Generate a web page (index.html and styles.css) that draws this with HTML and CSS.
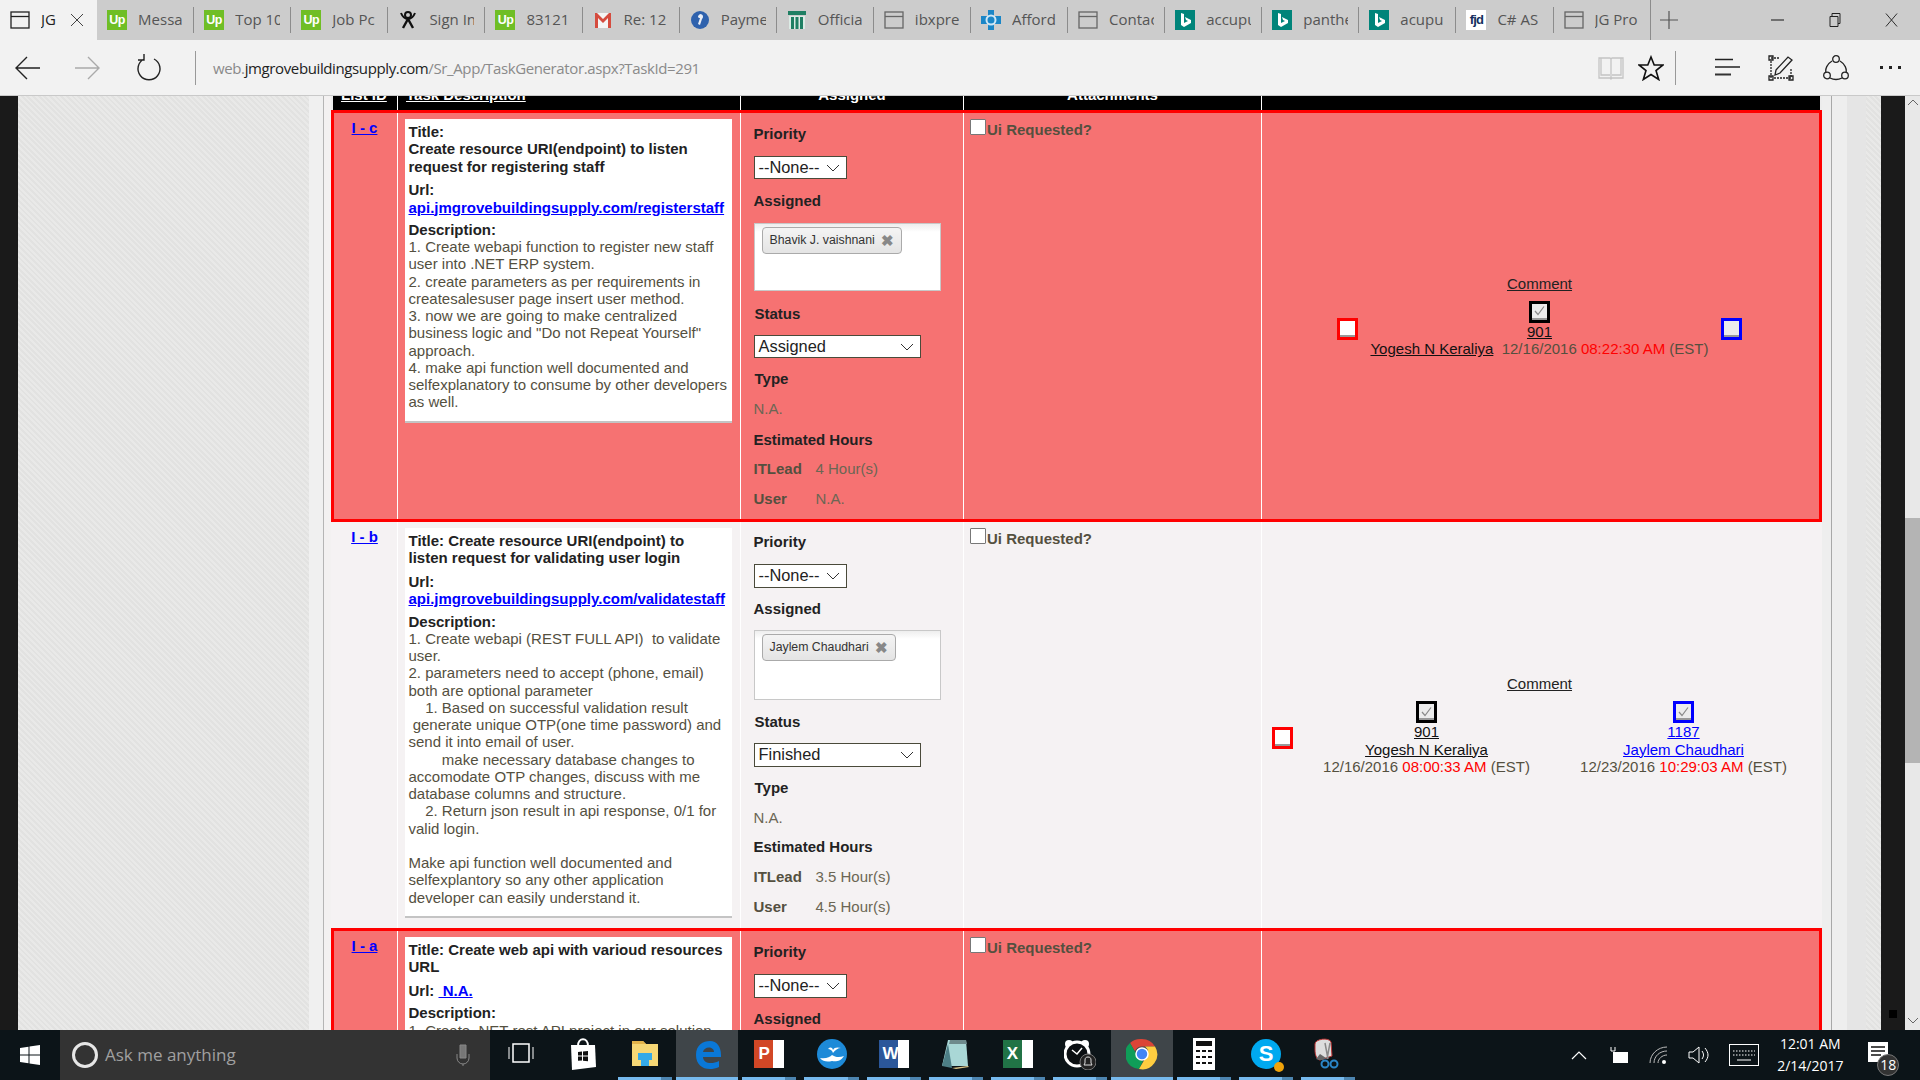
FILE: index.html
```html
<!DOCTYPE html>
<html lang="en">
<head>
<meta charset="utf-8">
<title>JG</title>
<link rel="stylesheet" href="styles.css">
</head>
<body>
<svg class="defs" width="0" height="0" aria-hidden="true">
  <symbol id="i-window" viewBox="0 0 20 20"><rect x="1" y="2" width="18" height="16" fill="none" stroke="currentColor" stroke-width="1.3"/><path d="M1 6.5h18" stroke="currentColor" stroke-width="1.3"/></symbol>
  <symbol id="i-bing" viewBox="0 0 20 20"><rect width="20" height="20" fill="#00847a"/><path d="M6 3l3 1v9l4-2-2-1-1-3 6 3v3l-7 4-3-2z" fill="#fff"/></symbol>
  <symbol id="i-check" viewBox="0 0 13 13"><path d="M2 7l3 3.5L11 2.5" fill="none" stroke="#8a8a8a" stroke-width="1.2"/></symbol>
  <symbol id="i-caret" viewBox="0 0 14 8"><path d="M1 1l6 6 6-6" fill="none" stroke="#333" stroke-width="1"/></symbol>
</svg>

<header class="tabs">
  <div class="tab tab-active">
    <svg class="tab-icon"><use href="#i-window"/></svg><span class="tab-title tab-title-active">JG</span>
    <svg class="tab-close" viewBox="0 0 14 14"><path d="M1 1l12 12M13 1L1 13" stroke="#444" stroke-width="1"/></svg>
  </div>
  <div class="tab"><span class="tab-icon up">Up</span><span class="tab-title">Messa</span></div>
  <div class="tab"><span class="tab-icon up">Up</span><span class="tab-title">Top 10</span></div>
  <div class="tab"><span class="tab-icon up">Up</span><span class="tab-title">Job Pc</span></div>
  <div class="tab">
    <svg class="tab-icon" viewBox="0 0 20 20"><path d="M3 3c2 5 5 6 7 6s5-1 7-6" fill="none" stroke="#111" stroke-width="2"/><circle cx="10" cy="5" r="3" fill="none" stroke="#111" stroke-width="2"/><path d="M5 18l5-9 5 9" fill="none" stroke="#111" stroke-width="2.4"/></svg><span class="tab-title">Sign In</span>
  </div>
  <div class="tab"><span class="tab-icon up">Up</span><span class="tab-title">83121</span></div>
  <div class="tab">
    <svg class="tab-icon" viewBox="0 0 20 20"><path d="M2 3h16v15H2z" fill="#f4f4f4"/><path d="M2 3v15h3V8l5 5 5-5v10h3V3h-2l-6 6-6-6z" fill="#d54c3f"/></svg><span class="tab-title">Re: 12</span>
  </div>
  <div class="tab">
    <svg class="tab-icon" viewBox="0 0 20 20"><circle cx="10" cy="10" r="9" fill="#2f62ad"/><path d="M10 4c3 0 4 3 2 5l-2 6-2-1 2-6c-1 0-2 0-2-2z" fill="#e9eef6"/></svg><span class="tab-title">Payme</span>
  </div>
  <div class="tab">
    <svg class="tab-icon" viewBox="0 0 20 20"><path d="M1 1h18v4H1z" fill="#1f7f63"/><path d="M2 6h16v13H2z" fill="#dcebe5"/><path d="M4 7h3v12H4zM8.500 7h3v12h-3zM13 7h3v12h-3z" fill="#1f7f63"/></svg><span class="tab-title">Officia</span>
  </div>
  <div class="tab"><svg class="tab-icon gray"><use href="#i-window"/></svg><span class="tab-title">ibxpre</span></div>
  <div class="tab">
    <svg class="tab-icon" viewBox="0 0 20 20"><path d="M7 0h6v6h7v8h-7v6H7v-6H0V6h7z" fill="#1a86c7"/><circle cx="10" cy="10" r="4.500" fill="none" stroke="#cfe8f7" stroke-width="2"/></svg><span class="tab-title">Afford</span>
  </div>
  <div class="tab"><svg class="tab-icon gray"><use href="#i-window"/></svg><span class="tab-title">Contac</span></div>
  <div class="tab"><svg class="tab-icon"><use href="#i-bing"/></svg><span class="tab-title">accupu</span></div>
  <div class="tab"><svg class="tab-icon"><use href="#i-bing"/></svg><span class="tab-title">panthe</span></div>
  <div class="tab"><svg class="tab-icon"><use href="#i-bing"/></svg><span class="tab-title">acupu</span></div>
  <div class="tab"><span class="tab-icon fjd">fjd</span><span class="tab-title">C# AS</span></div>
  <div class="tab tab-last"><svg class="tab-icon gray"><use href="#i-window"/></svg><span class="tab-title">JG Pro</span></div>
  <svg class="tab-plus" viewBox="0 0 18 18"><path d="M9 0v18M0 9h18" stroke="#555" stroke-width="1.2"/></svg>
  <div class="win-controls">
    <svg class="win-btn" viewBox="0 0 12 12"><path d="M0 6h12" stroke="#222"/></svg>
    <svg class="win-btn" viewBox="0 0 12 14"><path d="M1.500 3.500h8v10h-8zM3.500 3.500v-3h8v10h-2" fill="none" stroke="#222"/></svg>
    <svg class="win-btn" viewBox="0 0 14 14"><path d="M1 0l12 14M13 0L1 14" stroke="#222"/></svg>
  </div>
</header>

<nav class="toolbar">
  <svg class="tool tool-back" viewBox="0 0 26 24"><path d="M25 12H2M12 1L1 12l11 11" fill="none" stroke="#222" stroke-width="1.400"/></svg>
  <svg class="tool tool-fwd" viewBox="0 0 26 24"><path d="M1 12h23M14 1l11 11-11 11" fill="none" stroke="#aaa" stroke-width="1.400"/></svg>
  <svg class="tool tool-reload" viewBox="0 0 26 28"><path d="M8 5a11 11 0 1 0 10 0M8 0v6H2" fill="none" stroke="#222" stroke-width="1.400"/></svg>
  <span class="tool-divider"></span>
  <div class="url"><span class="url-dim">web.</span><span class="url-host">jmgrovebuildingsupply.com</span><span class="url-dim">/Sr_App/TaskGenerator.aspx?TaskId=291</span></div>
  <svg class="tool tool-book" viewBox="0 0 26 26"><path d="M1 3h11l1 1 1-1h11v20H14l-1 1-1-1H1zM13 4v20M3 3v17h9M23 3v17h-9" fill="none" stroke="#c4c4c4" stroke-width="1.300"/></svg>
  <svg class="tool tool-star" viewBox="0 0 26 26"><path d="M13 2l3.200 8H25l-7 5.500 2.700 9L13 19.500 5.300 24.500l2.700-9L1 10h8.800z" fill="none" stroke="#111" stroke-width="1.600"/></svg>
  <span class="tool-divider tool-divider-right"></span>
  <svg class="tool tool-hub" viewBox="0 0 26 20"><path d="M1 1.500h18M1 9h25" stroke="#222" stroke-width="1.300"/><path d="M1 16.500h16" stroke="#333" stroke-width="2"/></svg>
  <svg class="tool tool-note" viewBox="0 0 26 26"><path d="M3 3h9M3 6v17M23 14v9M6 23h17" fill="none" stroke="#222" stroke-width="1.300" stroke-dasharray="2 1"/><path d="M1 1h4v4H1zM1 21h4v4H1zM21 21h4v4h-4z" fill="none" stroke="#222" stroke-width="1.300"/><path d="M8 15L20 2l4 3-12 13-5 2z" fill="none" stroke="#222" stroke-width="1.300"/></svg>
  <svg class="tool tool-share" viewBox="0 0 26 26"><path d="M9 6C4 9 2 14 3 18M17 6c5 3 7 8 6 12M7 23c4 2 8 2 12 0" fill="none" stroke="#222" stroke-width="1.300"/><circle cx="13" cy="4" r="3.300" fill="none" stroke="#222" stroke-width="1.300"/><circle cx="4" cy="20.500" r="3.300" fill="none" stroke="#222" stroke-width="1.300"/><circle cx="22" cy="20.500" r="3.300" fill="none" stroke="#222" stroke-width="1.300"/></svg>
  <div class="tool-more"><i></i><i></i><i></i></div>
</nav>

<main class="viewport">
  <div class="gutter-black"></div>
  <div class="texture texture-left"></div>
  <div class="gutter-left"></div>

  <section class="sheet">
    <div class="head">
      <div class="head-cell"><a class="head-link head-id">List ID</a></div>
      <div class="head-cell"><a class="head-link head-desc">Task Description</a></div>
      <div class="head-cell head-center"><span class="head-link head-plain">Assigned</span></div>
      <div class="head-cell head-center"><span class="head-link head-plain">Attachments</span></div>
      <div class="head-cell head-last"></div>
    </div>

    <article class="row row-alert">
      <div class="cell cell-id"><a class="task-id" href="#">I - c</a></div>
      <div class="cell">
        <div class="box">
          <div class="strong title">Title:<br>Create resource URI(endpoint) to listen request for registering staff</div>
          <div class="strong gap">Url:<br><a class="box-link" href="#">api.jmgrovebuildingsupply.com/registerstaff</a></div>
          <div class="strong gap-sm">Description:</div>
          <div class="body">1. Create webapi function to register new staff user into .NET ERP system.<br>2. create parameters as per requirements in createsalesuser page insert user method.<br>3. now we are going to make centralized business logic and "Do not Repeat Yourself" approach.<br>4. make api function well documented and selfexplanatory to consume by other developers as well.</div>
        </div>
      </div>
      <div class="cell cell-meta tight">
        <div class="lbl first">Priority</div>
        <div class="select select-sm"><span>--None--</span><svg class="caret"><use href="#i-caret"/></svg></div>
        <div class="lbl">Assigned</div>
        <div class="chosen"><span class="tag">Bhavik J. vaishnani<b class="tag-x">✖</b></span></div>
        <div class="lbl lbl-status">Status</div>
        <div class="select select-lg"><span>Assigned</span><svg class="caret"><use href="#i-caret"/></svg></div>
        <div class="lbl lbl-type">Type</div>
        <div class="val">N.A.</div>
        <div class="lbl lbl-est">Estimated Hours</div>
        <div class="hours hours-lead"><b>ITLead</b><span>4 Hour(s)</span></div>
        <div class="hours"><b>User</b><span>N.A.</span></div>
      </div>
      <div class="cell cell-ui"><span class="ui-check"></span><b class="ui-label">Ui Requested?</b></div>
      <div class="cell cell-comments">
        <a class="comment" href="#">Comment</a>
        <div class="approvals approvals-narrow">
          <span class="flag flag-red"><span class="flag-in flag-white"></span></span>
          <div class="who">
            <span class="flag flag-black"><span class="flag-in"><svg class="tick"><use href="#i-check"/></svg></span></span>
            <a class="code" href="#">901</a>
            <div><a class="code" href="#">Yogesh N Keraliya</a> <span class="stamp">&nbsp;12/16/2016 <em>08:22:30 AM</em> (EST)</span></div>
          </div>
          <span class="flag flag-blue"><span class="flag-in"></span></span>
        </div>
      </div>
    </article>

    <article class="row row-plain">
      <div class="cell cell-id"><a class="task-id" href="#">I - b</a></div>
      <div class="cell">
        <div class="box">
          <div class="strong title">Title: Create resource URI(endpoint) to listen request for validating user login</div>
          <div class="strong gap">Url:<br><a class="box-link" href="#">api.jmgrovebuildingsupply.com/validatestaff</a></div>
          <div class="strong gap-sm">Description:</div>
          <div class="body">1. Create webapi (REST FULL API) &nbsp;to validate user.<br>2. parameters need to accept (phone, email) both are optional parameter<br>&nbsp;&nbsp;&nbsp;&nbsp;1. Based on successful validation result<br>&nbsp;generate unique OTP(one time password) and send it into email of user.<br>&nbsp;&nbsp;&nbsp;&nbsp;&nbsp;&nbsp;&nbsp;&nbsp;make necessary database changes to accomodate OTP changes, discuss with me database columns and structure.<br>&nbsp;&nbsp;&nbsp;&nbsp;2. Return json result in api response, 0/1 for valid login.<br><br>Make api function well documented and selfexplantory so any other application developer can easily understand it.</div>
        </div>
      </div>
      <div class="cell cell-meta">
        <div class="lbl first">Priority</div>
        <div class="select select-sm"><span>--None--</span><svg class="caret"><use href="#i-caret"/></svg></div>
        <div class="lbl">Assigned</div>
        <div class="chosen"><span class="tag">Jaylem Chaudhari<b class="tag-x">✖</b></span></div>
        <div class="lbl lbl-status">Status</div>
        <div class="select select-lg"><span>Finished</span><svg class="caret"><use href="#i-caret"/></svg></div>
        <div class="lbl lbl-type">Type</div>
        <div class="val">N.A.</div>
        <div class="lbl lbl-est">Estimated Hours</div>
        <div class="hours hours-lead"><b>ITLead</b><span>3.5 Hour(s)</span></div>
        <div class="hours"><b>User</b><span>4.5 Hour(s)</span></div>
      </div>
      <div class="cell cell-ui"><span class="ui-check"></span><b class="ui-label">Ui Requested?</b></div>
      <div class="cell cell-comments">
        <a class="comment" href="#">Comment</a>
        <div class="approvals approvals-wide">
          <span class="flag flag-red"><span class="flag-in flag-white"></span></span>
          <div class="who who-col">
            <span class="flag flag-black"><span class="flag-in"><svg class="tick"><use href="#i-check"/></svg></span></span>
            <a class="code" href="#">901</a>
            <a class="code name" href="#">Yogesh N Keraliya</a>
            <div class="stamp">12/16/2016 <em>08:00:33 AM</em> (EST)</div>
          </div>
          <div class="who who-col">
            <span class="flag flag-blue"><span class="flag-in"><svg class="tick"><use href="#i-check"/></svg></span></span>
            <a class="code code-blue" href="#">1187</a>
            <a class="code code-blue name" href="#">Jaylem Chaudhari</a>
            <div class="stamp">12/23/2016 <em>10:29:03 AM</em> (EST)</div>
          </div>
        </div>
      </div>
    </article>

    <article class="row row-alert">
      <div class="cell cell-id"><a class="task-id" href="#">I - a</a></div>
      <div class="cell">
        <div class="box">
          <div class="strong title">Title: Create web api with varioud resources URL</div>
          <div class="strong gap">Url: <a class="box-link" href="#">&nbsp;N.A.</a></div>
          <div class="strong gap-sm">Description:</div>
          <div class="body">1. Create .NET rest API project in our solution.</div>
        </div>
      </div>
      <div class="cell cell-meta meta-low">
        <div class="lbl first">Priority</div>
        <div class="select select-sm"><span>--None--</span><svg class="caret"><use href="#i-caret"/></svg></div>
        <div class="lbl">Assigned</div>
      </div>
      <div class="cell cell-ui"><span class="ui-check"></span><b class="ui-label">Ui Requested?</b></div>
      <div class="cell cell-comments"></div>
    </article>
  </section>

  <div class="gutter-a"></div>
  <div class="gutter-b"></div>
  <div class="gutter-c"></div>
  <div class="texture texture-right"></div>
  <div class="gutter-dark"><span class="mini-square"></span></div>
  <div class="scrollbar">
    <svg class="scroll-arrow" viewBox="0 0 12 7"><path d="M1 6l5-5 5 5" fill="none" stroke="#666"/></svg>
    <div class="scroll-thumb"></div>
    <svg class="scroll-arrow scroll-arrow-end" viewBox="0 0 12 7"><path d="M1 1l5 5 5-5" fill="none" stroke="#666"/></svg>
  </div>
</main>

<footer class="taskbar">
  <div class="start"><svg width="20" height="20" viewBox="0 0 20 20"><path d="M0 3l8.500-1.200V9.500H0zM9.500 1.600L20 0v9.500H9.500zM0 10.500h8.500v7.700L0 17zM9.500 10.500H20V20L9.500 18.400z" fill="#fff"/></svg></div>
  <div class="search">
    <span class="cortana"></span>
    <span class="search-text">Ask me anything</span>
    <svg class="mic" viewBox="0 0 14 22"><path d="M4 1h6v13H4z" fill="#777" stroke="#888"/><path d="M1 10v4a6 6 0 0 0 12 0v-4M7 20v2" fill="none" stroke="#888"/></svg>
  </div>
  <div class="tb-item"><svg class="tb-icon" viewBox="0 0 32 32"><rect x="8" y="6" width="16" height="18" fill="none" stroke="#fff" stroke-width="1.500"/><path d="M4 9v12M28 9v12" stroke="#fff"/></svg></div>
  <div class="tb-item"><svg class="tb-icon" viewBox="0 0 32 32"><path d="M11 8c0-9 10-9 10 0" fill="none" stroke="#fff" stroke-width="2"/><path d="M4 7l24 0 1 22-24 3z" fill="#fff"/><path d="M11 14l4-.5v4h-4zM16 13.400l5-.5v4.600h-5zM11 18.500h4v4l-4 .3zM16 18.500h5v4.800l-5-.5z" fill="#111"/></svg></div>
  <div class="tb-item tb-run"><svg class="tb-icon" viewBox="0 0 32 32"><path d="M3 3h11l3 3h12v22H3z" fill="#f6d775"/><path d="M3 3h11l3 3H3z" fill="#e3b34a"/><path d="M9 15h14v7h-3v6h-8v-6H9z" fill="#34a9e8"/></svg></div>
  <div class="tb-item tb-run tb-active"><svg class="tb-icon" viewBox="0 0 32 32"><path d="M5 17C5 7 12 3 19 3c7 0 11 6 11 14v2H12c0 6 8 8 16 4v6c-11 5-23 1-23-12zm7-3h11c0-6-10-6-11 0z" fill="#0a78d7"/></svg></div>
  <div class="tb-item tb-run"><span class="tb-doc tb-ppt">P</span></div>
  <div class="tb-item tb-run"><svg class="tb-icon" viewBox="0 0 32 32"><circle cx="16" cy="16" r="15" fill="#1d8ad8"/><path d="M4 20c6 1 10-1 12-3 3 2 7 3 12 1-3 5-8 6-12 5-4 1-9 1-12-3zM12 11c2-2 4-2 5 1 1-3 5-3 8-2-3 0-6 2-8 5-1-3-3-4-5-4z" fill="#fff"/></svg></div>
  <div class="tb-item tb-run"><span class="tb-doc tb-word">W</span></div>
  <div class="tb-item tb-run"><svg class="tb-icon" viewBox="0 0 32 32"><path d="M8 2h18l2 26H2z" fill="#a9d7d6"/><path d="M10 2h16l1 4H9z" fill="#6e8a8c"/><path d="M2 28L8 6l4 24z" fill="#4d7f86"/><path d="M12 30l16-2 1 1-13 2z" fill="#dcc689"/></svg></div>
  <div class="tb-item tb-run"><span class="tb-doc tb-excel">X</span></div>
  <div class="tb-item tb-run"><svg class="tb-icon" viewBox="0 0 32 32"><circle cx="5" cy="6" r="4" fill="#fff"/><circle cx="21" cy="6" r="4" fill="#fff"/><circle cx="13" cy="16" r="12" fill="#0b0f12" stroke="#fff" stroke-width="3"/><path d="M8 12l5 4 5-6" fill="none" stroke="#fff" stroke-width="1.500"/><circle cx="24" cy="24" r="8" fill="#222" stroke="#777"/><path d="M24 19c-2 0-3 1-3 3v3l-1 2h8l-1-2v-3c0-2-1-3-3-3z" fill="none" stroke="#ddd"/></svg></div>
  <div class="tb-item tb-run tb-active"><svg class="tb-icon" viewBox="0 0 32 32"><path d="M16 1a15 15 0 0 1 13 7.500H16a7.500 7.500 0 0 0-7 5L4 5A15 15 0 0 1 16 1z" fill="#db4437"/><path d="M4 5l7 12a7 7 0 0 0 6 6l-4 8A15 15 0 0 1 4 5z" fill="#0f9d58"/><path d="M29 8.500A15 15 0 0 1 13 31l7-12a7 7 0 0 0-1-10.500z" fill="#ffcd40"/><circle cx="16" cy="16" r="6" fill="#4285f4" stroke="#fff" stroke-width="1.500"/></svg></div>
  <div class="tb-item tb-run"><svg class="tb-icon" viewBox="0 0 32 32"><path d="M5 0h22v32H5z" fill="#fff"/><path d="M8 3h16v5H8z" fill="#111"/><path d="M8 12h4v2H8zM14 12h4v2h-4zM20 12h4v2h-4zM8 18h4v2H8zM14 18h4v2h-4zM20 18h4v2h-4zM8 24h4v2H8zM14 24h4v2h-4zM20 24h4v2h-4z" fill="#111"/></svg></div>
  <div class="tb-item tb-run"><span class="tb-skype">S<i class="tb-skype-dot"></i></span></div>
  <div class="tb-item tb-run"><svg class="tb-icon" viewBox="0 0 32 32"><path d="M3 6c0-5 14-7 16-2l1 14-12 4C5 22 3 17 3 12z" fill="#ddd" stroke="#b33" stroke-width="1"/><path d="M8 16l-4 5c4 2 8 1 10-1z" fill="#666"/><path d="M13 5l3 16M18 5l-3 16" stroke="#888" stroke-width="1.500"/><circle cx="13" cy="26" r="3.500" fill="none" stroke="#2a86c8" stroke-width="2"/><circle cx="22" cy="26" r="3.500" fill="none" stroke="#2a86c8" stroke-width="2"/></svg></div>
  <div class="tray">
    <svg class="tray-icon tray-chev" viewBox="0 0 16 9"><path d="M1 8l7-7 7 7" fill="none" stroke="#fff" stroke-width="1.200"/></svg>
    <svg class="tray-icon tray-batt" viewBox="0 0 20 18"><path d="M4 6h15v11H4z" fill="#fff"/><path d="M2 1v4h4V1" fill="none" stroke="#fff"/></svg>
    <svg class="tray-icon tray-wifi" viewBox="0 0 20 20"><path d="M1 18C1 9 9 2 18 2M5 18c0-7 6-12 13-12M9 18c0-4 4-8 9-8" fill="none" stroke="#bbb"/><circle cx="15" cy="17" r="2" fill="#fff"/></svg>
    <svg class="tray-icon tray-vol" viewBox="0 0 22 22"><path d="M1 8h4l6-5v16l-6-5H1z" fill="none" stroke="#fff"/><path d="M14 7c2 3 2 5 0 8M17 4c4 5 4 9 0 14" fill="none" stroke="#fff"/></svg>
    <svg class="tray-icon tray-kbd" viewBox="0 0 30 22"><rect x=".5" y=".5" width="29" height="21" fill="none" stroke="#fff"/><path d="M4 7h22M4 11h22" stroke="#fff" stroke-dasharray="1.500 1.500"/><path d="M8 16h14" stroke="#fff"/></svg>
    <div class="clock"><span>12:01 AM</span><span>2/14/2017</span></div>
    <div class="notify">
      <svg class="notify-page" viewBox="0 0 20 20"><path d="M0 0h20v15l-6 5H0z" fill="#fff"/><path d="M3 5h14M3 9h14M3 13h10" stroke="#111" stroke-width="1.500"/></svg>
      <span class="notify-count">18</span>
    </div>
  </div>
</footer>
</body>
</html>
```
FILE: styles.css
```css
* { box-sizing: border-box; }
html, body { height: 100%; }
body {
  margin: 0;
  height: 1080px;
  overflow: hidden;
  display: flex;
  flex-direction: column;
  font-family: "Liberation Sans", Arial, sans-serif;
  font-size: 15px;
  line-height: 17.25px;
  color: #54503f;
  background: #f2f2f2;
}
a { color: inherit; }
.defs { display: block; width: 0; height: 0; }

/* tab strip */
.tabs {
  height: 40px;
  flex: none;
  display: flex;
  align-items: center;
  background: #cccccc;
  font-family: "Open Sans", sans-serif;
}
.tab {
  width: 97.1px;
  height: 40px;
  flex: none;
  display: flex;
  align-items: center;
  padding-left: 10px;
}
.tab::after {
  content: "";
  width: 1px;
  height: 26px;
  background: #8c8c8c;
  margin-left: auto;
}
.tab-active { background: #f2f2f2; }
.tab-active::after { display: none; }
.tab-last::after { height: 40px; }
.tab-icon {
  width: 20px;
  height: 20px;
  flex: none;
  color: #222;
}
.gray { color: #666; }
.up {
  background: #6fbe25;
  color: #fff;
  font: bold 12.5px/20px "Liberation Sans", sans-serif;
  text-align: center;
  letter-spacing: -0.5px;
}
.fjd {
  background: #fff;
  color: #14305e;
  font: bold 13px/20px "Liberation Sans", sans-serif;
  text-align: center;
  letter-spacing: -0.8px;
}
.tab-title {
  width: 45px;
  margin-left: 11px;
  overflow: hidden;
  white-space: nowrap;
  font-size: 15px;
  color: #555;
}
.tab-title-active { width: 22px; color: #222; }
.tab-close { width: 14px; height: 14px; margin-left: 7px; }
.tab-plus { width: 18px; height: 18px; margin-left: 9px; flex: none; }
.win-controls {
  margin-left: auto;
  display: flex;
  align-items: center;
  gap: 44px;
  padding-right: 22px;
}
.win-btn { width: 13px; height: 14px; display: block; }

/* address bar */
.toolbar {
  height: 56px;
  flex: none;
  display: flex;
  align-items: center;
  background: #f2f2f2;
  border-bottom: 1px solid #c9c9c9;
  padding-left: 15px;
}
.tool { flex: none; display: block; }
.tool-back { width: 26px; height: 24px; }
.tool-fwd { width: 26px; height: 24px; margin-left: 33px; }
.tool-reload { width: 26px; height: 28px; margin-left: 36px; }
.tool-divider { width: 1px; height: 34px; background: #999; margin-left: 33px; flex: none; }
.url { margin-left: 17px; width: 1385px; font: 15px "Open Sans", sans-serif; letter-spacing: -0.38px; white-space: nowrap; }
.url-dim { color: #8a8a8a; }
.url-host { color: #222; }
.tool-star { width: 26px; height: 26px; margin-left: 14px; }
.tool-book { width: 26px; height: 26px; }
.tool-divider-right { margin-left: 11px; }
.tool-hub { width: 26px; height: 20px; margin-left: 38px; }
.tool-note { width: 26px; height: 26px; margin-left: 28px; }
.tool-share { width: 26px; height: 26px; margin-left: 29px; }
.tool-more { display: flex; gap: 6px; margin-left: 31px; }
.tool-more i { width: 3px; height: 3px; background: #222; display: block; }

/* page area */
.viewport {
  flex: 1;
  min-height: 0;
  display: flex;
  overflow: hidden;
  background: #ececec;
}
.gutter-black { width: 18px; flex: none; background: #1a1a1a; }
.texture {
  flex: none;
  background-color: #e6e6e5;
  background-image: repeating-linear-gradient(45deg, #e9e9e8 0 2px, #e2e2e1 2px 4px);
}
.texture-left { width: 291px; }
.texture-right { width: 15px; }
.gutter-left { width: 22px; flex: none; background: #f0f0f0; border-right: 7px solid #f3f1f1; }
.gutter-left::after { content: ""; display: block; width: 1px; height: 100%; background: #b5b5b5; margin-left: 14px; }
.sheet { width: 1491px; flex: none; overflow: hidden; }
.gutter-a { width: 9px; flex: none; background: #eeeeee; }
.gutter-b { width: 16px; flex: none; background: #eeeeee; border-left: 1px solid #a8a8a8; }
.gutter-c { width: 19px; flex: none; background: #e5e5e5; }
.gutter-dark { width: 24px; flex: none; background: #1a1a1a; display: flex; flex-direction: column; justify-content: flex-end; align-items: center; padding-bottom: 12px; }
.mini-square { width: 8px; height: 8px; background: #000; display: block; }
.scrollbar { width: 15px; flex: none; background: #e8e8e8; display: flex; flex-direction: column; }
.scroll-arrow { width: 12px; height: 7px; margin: 3px auto 0; flex: none; display: block; }
.scroll-thumb { height: 245px; margin-top: 412px; background: #b4b4b4; flex: none; }
.scroll-arrow-end { margin-top: auto; margin-bottom: 6px; }

/* table */
.head {
  display: grid;
  grid-template-columns: 65px 343px 223px 298px 558px;
  margin: 0 2px;
  height: 14px;
  background: #000;
  overflow: hidden;
}
.head-cell { border-right: 1px solid #fff; overflow: hidden; }
.head-last { border-right: 0; }
.head-center { text-align: center; }
.head-link {
  display: block;
  margin-top: -10px;
  color: #fff;
  font-weight: bold;
  text-decoration: underline;
}
.head-plain { text-decoration: none; }
.head-id { margin-left: 8px; }
.head-desc { margin-left: 8px; }

.row {
  display: grid;
  grid-template-columns: 64px 343px 223px 298px 557px;
}
.row-alert { background: #f67272; border: 3px solid #ff0000; }
.row-plain { background: #f5f2f3; border: solid transparent; border-width: 0 3px; }
.cell { border-right: 1px solid #fff; min-width: 0; }
.cell-id { text-align: center; padding-top: 6px; padding-right: 2px; }
.task-id { color: #0000ff; font-weight: bold; }

.box {
  width: 326.5px;
  margin: 6px 0 0 7px;
  padding: 4px 2px 10px 3.5px;
  background: #fff;
  border-bottom: 2px solid #c4c4c4;
}
.strong { font-weight: bold; color: #222; }
.title { padding-right: 6px; }
.gap { margin-top: 6.5px; }
.gap-sm { margin-top: 5px; }
.box-link { color: #0000ff; }
.body { color: #54503f; }

/* metadata column: base values fit the plain row, .tight fits the first row */
.cell-meta { padding: 12px 0 13.5px 12.5px; }
.lbl { font-weight: bold; color: #222; line-height: 16px; margin-top: 13px; }
.lbl-status { margin-top: 14px; padding-left: 1px; }
.lbl-type { margin-top: 13px; padding-left: 1px; }
.lbl-est { margin-top: 13px; }
.val { margin-top: 14px; line-height: 16px; color: #6b6654; }
.hours { margin-top: 14px; line-height: 16px; color: #6b6654; display: flex; }
.hours b { width: 62px; color: #54503f; }
.select {
  display: flex;
  align-items: center;
  justify-content: space-between;
  height: 24px;
  margin-top: 14px;
  padding: 0 6px 0 4px;
  background: #fff;
  border: 1px solid #4a4a3a;
  font-size: 16.4px;
  color: #222;
}
.select-sm { width: 93px; }
.select-lg { width: 167px; margin-top: 12.5px; }
.chosen {
  height: 70px;
  width: 187px;
  margin-top: 13px;
  padding: 3px 0 0 7px;
  background: linear-gradient(#eee 0, #fff 8px);
  border: 1px solid #c8c8c8;
}
.tight { padding-top: 13px; padding-bottom: 12px; }
.tight .lbl { margin-top: 14px; }
.tight .lbl-status { margin-top: 15px; }
.tight .lbl-type { margin-top: 13px; }
.tight .lbl-est { margin-top: 15px; }
.tight .select { height: 23px; }
.tight .select-lg { margin-top: 13px; }
.tight .chosen { height: 68px; margin-top: 14px; }
.tight .hours-lead { margin-top: 13px; }
.meta-low { padding-top: 12.5px; }
.lbl.first { margin-top: 0; }

.caret { width: 14px; height: 8px; display: block; }
.tag {
  display: inline-flex;
  align-items: center;
  height: 27px;
  padding: 0 7px;
  background: linear-gradient(#f4f4f4, #e4e4e4);
  border: 1px solid #aaa;
  border-radius: 4px;
  font-size: 12.3px;
  color: #333;
  white-space: nowrap;
}
.tag-x { margin-left: 6px; color: #888; font-size: 15px; }

.cell-ui { display: flex; align-items: flex-start; padding: 6px 0 0 6px; }
.ui-check { width: 16px; height: 16px; flex: none; background: #fff; border: 1px solid #777; border-radius: 1px; }
.ui-label { margin-left: 1px; margin-top: 2px; color: #54503f; }

.cell-comments { display: flex; flex-direction: column; justify-content: center; align-items: center; border-right: 0; }
.comment { color: #222; margin-right: 2px; }
.approvals { display: flex; align-items: center; gap: 12px; margin-top: 9px; }
.approvals-narrow { margin-right: 2px; }
.approvals-wide { width: 100%; gap: 0; padding-left: 10px; }
.flag { display: block; width: 21px; height: 22px; border: 3px solid; flex: none; }
.flag-red { border-color: #ff0000; }
.flag-black { border-color: #000; margin: 0 auto; }
.flag-blue { border-color: #0000ff; }
.who-col .flag-blue { margin: 0 auto; }
.flag-in { display: flex; align-items: center; justify-content: center; height: 100%; background: #ececec; border-bottom: 2px solid #999; }
.flag-white { background: #fff; }
.tick { width: 13px; height: 13px; display: block; }
.who { text-align: center; }
.who-col { width: 257px; flex: none; }
.approvals-wide .flag-red { margin-right: 5px; }
.code { display: table; margin: 0 auto; color: #111; }
.who > div > .code { display: inline; }
.code-blue { color: #0000ff; }
.stamp { color: #54503f; white-space: nowrap; }
.stamp em { font-style: normal; color: #ff0000; }

/* taskbar */
.taskbar {
  height: 50px;
  flex: none;
  display: flex;
  align-items: stretch;
  background: #0c1418;
  font-family: "Open Sans", sans-serif;
}
.start { width: 60px; flex: none; display: flex; align-items: center; justify-content: center; }
.search {
  width: 430px;
  flex: none;
  display: flex;
  align-items: center;
  background: #333333;
  padding-left: 12px;
}
.cortana { width: 26px; height: 26px; border: 3px solid #e6e6e6; border-radius: 50%; flex: none; }
.search-text { margin-left: 7px; font-size: 17px; color: #a0a0a0; }
.mic { width: 14px; height: 22px; margin-left: auto; margin-right: 20px; }
.tb-item {
  width: 62.1px;
  flex: none;
  display: flex;
  align-items: center;
  justify-content: center;
  position: relative;
  padding-bottom: 2px;
}
.tb-run::after {
  content: "";
  position: absolute;
  left: 4px;
  right: 4px;
  bottom: 0;
  height: 3px;
  background: linear-gradient(90deg, #76b9ed 0 80%, #4d85b0 80%);
}
.tb-active { background: #3f4549; }
.tb-active::after { left: 0; right: 0; background: #76b9ed; }
.tb-icon { width: 32px; height: 32px; display: block; }
.tb-doc {
  width: 30px;
  height: 28px;
  display: block;
  color: #fff;
  font: bold 17px/28px "Liberation Sans", sans-serif;
  padding-left: 4px;
}
.tb-ppt { background: linear-gradient(90deg, #d24726 62%, #fff 62%); }
.tb-word { background: linear-gradient(90deg, #2b579a 62%, #fff 62%); }
.tb-excel { background: linear-gradient(90deg, #217346 62%, #fff 62%); }
.tb-skype {
  width: 30px;
  height: 30px;
  border-radius: 50%;
  background: #00a9f0;
  color: #fff;
  font: bold 22px/30px "Liberation Sans", sans-serif;
  text-align: center;
  position: relative;
}
.tb-skype-dot { position: absolute; right: -3px; bottom: -3px; width: 10px; height: 10px; border-radius: 50%; background: #f0a30a; }
.tray { flex: 1; min-width: 0; display: flex; align-items: center; padding-left: 212px; color: #fff; }
.tray-icon { display: block; flex: none; }
.tray-chev { width: 16px; height: 9px; }
.tray-batt { width: 20px; height: 18px; margin-left: 22px; }
.tray-wifi { width: 20px; height: 20px; margin-left: 20px; }
.tray-vol { width: 22px; height: 22px; margin-left: 19px; }
.tray-kbd { width: 30px; height: 22px; margin-left: 19px; }
.clock {
  width: 102px;
  flex: none;
  display: flex;
  flex-direction: column;
  align-items: center;
  gap: 6px;
  font-size: 14px;
  line-height: 16px;
}
.notify { position: relative; width: 38px; height: 36px; flex: none; }
.notify-page { width: 20px; height: 20px; display: block; margin: 5px 0 0 7px; }
.notify-count {
  position: absolute;
  right: 0;
  bottom: -3px;
  width: 22px;
  height: 22px;
  border-radius: 50%;
  background: #333;
  border: 1px solid #777;
  text-align: center;
  font-size: 14px;
  line-height: 20px;
  color: #fff;
}
```
